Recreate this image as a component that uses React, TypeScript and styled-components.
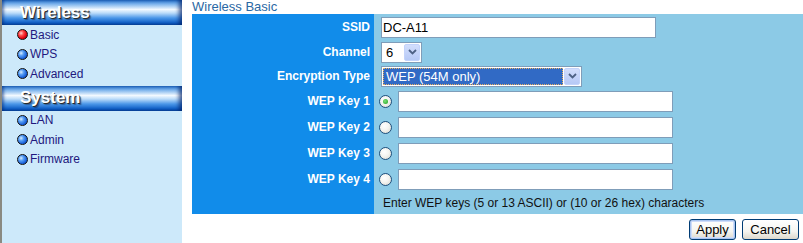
import React from "react";
import styled, { createGlobalStyle, css } from "styled-components";

const Global = createGlobalStyle`
  html, body { margin: 0; padding: 0; background: #fff; }
  body { font-family: Arial, "Liberation Sans", sans-serif; }
  * { box-sizing: border-box; }
`;

const Page = styled.div`
  display: flex;
  width: 803px;
  height: 243px;
  overflow: hidden;
`;

const Sidebar = styled.nav`
  width: 182px;
  flex: none;
  height: 243px;
  background: #cde9fa;
  border-left: 2px solid #8a8a82;
  display: flex;
  flex-direction: column;
`;

const SectionHeader = styled.div<{ $gap?: number }>`
  height: 25px;
  margin-top: ${(p) => p.$gap ?? 0}px;
  padding-left: 18px;
  display: flex;
  align-items: center;
  font: bold 17px Arial, "Liberation Sans", sans-serif;
  color: #fff;
  text-shadow: 1px 1px 0 #2a2a2a, 2px 2px 1px rgba(0, 0, 0, 0.35);
  background: linear-gradient(
    to bottom,
    #2a78d2 0%,
    #7ab2ec 16%,
    #f2f9ff 38%,
    #bcdcfa 52%,
    #4a96e8 72%,
    #0d5cc4 92%,
    #0a4aa2 100%
  );
  box-shadow: inset 3px 0 3px -1px rgba(0, 40, 120, 0.55),
    inset -4px 0 4px -1px rgba(0, 30, 100, 0.7);
`;

const MenuList = styled.ul`
  list-style: none;
  margin: 0;
  padding: 0;
`;

const MenuItem = styled.li`
  height: 19.5px;
  display: flex;
  align-items: center;
  padding-left: 15px;
  font-size: 12px;
  color: #22187e;
  gap: 2px;
`;

const Ball = styled.span<{ $active?: boolean }>`
  width: 11px;
  height: 11px;
  border-radius: 50%;
  border: 1px solid #101010;
  flex: none;
  ${(p) =>
    p.$active
      ? css`
          background: radial-gradient(circle at 35% 35%, #ffd0d0 0%, #ff4a4a 30%, #e00010 65%, #8a0008 100%);
        `
      : css`
          background: radial-gradient(circle at 35% 35%, #d8ecff 0%, #5aa0f4 30%, #1a62dc 65%, #0a3a9a 100%);
        `}
`;

const Main = styled.main`
  margin-left: 10px;
  flex: 1;
  display: flex;
  flex-direction: column;
`;

const Title = styled.div`
  height: 14px;
  font-size: 13px;
  line-height: 14px;
  color: #2a68a4;
  display: flex;
  align-items: flex-start;
`;

const Panel = styled.div`
  display: grid;
  grid-template-columns: 182px 1fr;
  grid-template-rows: 26px 24px 24px 26px 26px 26px 26px 22px;
  background: #8ccae6;
  height: 200px;
`;

const Label = styled.div`
  background: #118cea;
  color: #fff;
  font-weight: bold;
  font-size: 12px;
  display: flex;
  align-items: center;
  justify-content: flex-end;
  padding-right: 4px;
`;

const Cell = styled.div<{ $pad?: number }>`
  display: flex;
  align-items: center;
  padding-left: ${(p) => p.$pad ?? 7}px;
`;

const TextBox = styled.input<{ $w: number }>`
  width: ${(p) => p.$w}px;
  height: 21px;
  border: 1px solid #7f9db9;
  background: #fff;
  font: 13px Arial, "Liberation Sans", sans-serif;
  color: #000;
  padding: 0 0 0 1px;
  margin: 0;
  outline: none;
`;

const SelectBox = styled.div<{ $w: number }>`
  width: ${(p) => p.$w}px;
  height: 21px;
  border: 1px solid #7f9db9;
  background: #fff;
  display: flex;
  align-items: stretch;
  padding: 1px;
  font-size: 13px;
`;

const SelectValue = styled.div<{ $focused?: boolean }>`
  flex: 1;
  display: flex;
  align-items: center;
  padding-left: 3px;
  ${(p) =>
    p.$focused
      ? css`
          background: #316ac5;
          color: #fff;
          outline: 1px dotted #e8b060;
          outline-offset: -1px;
          margin-right: 1px;
        `
      : css`
          color: #000;
        `}
`;

const DropButton = styled.div`
  width: 16px;
  flex: none;
  border-radius: 2px;
  background: linear-gradient(to bottom, #d2defc, #b6c9f6);
  border: 1px solid #c3d3fb;
  display: flex;
  align-items: center;
  justify-content: center;
`;

const Radio = styled.span<{ $checked?: boolean }>`
  width: 13px;
  height: 13px;
  border-radius: 50%;
  border: 1px solid #1f4f7c;
  background: radial-gradient(circle at 40% 35%, #ffffff 0%, #f4f4f0 45%, #d4d4cc 100%);
  display: flex;
  align-items: center;
  justify-content: center;
  flex: none;
  margin-right: 6px;
  &::after {
    content: "";
    display: ${(p) => (p.$checked ? "block" : "none")};
    width: 5px;
    height: 5px;
    border-radius: 50%;
    background: radial-gradient(circle at 40% 40%, #7ee07a, #1aa01a);
  }
`;

const Note = styled.div`
  font-size: 12px;
  color: #111;
  padding-left: 9px;
  display: flex;
  align-items: center;
`;

const Actions = styled.div`
  display: flex;
  justify-content: flex-end;
  gap: 6px;
  padding: 5px 4px 0 0;
`;

const Button = styled.button<{ $default?: boolean; $w: number }>`
  width: ${(p) => p.$w}px;
  height: 21px;
  border: 1px solid #003c74;
  border-radius: 3px;
  background: linear-gradient(to bottom, #ffffff 0%, #f5f5f0 60%, #dcd8cc 100%);
  font: 13px Arial, "Liberation Sans", sans-serif;
  color: #000;
  padding: 0;
  ${(p) =>
    p.$default &&
    css`
      box-shadow: inset 0 0 0 1px #a8c4f0, inset 0 0 0 2px #cfdcf8;
    `}
`;

const Chevron = () => (
  <svg width="9" height="6" viewBox="0 0 9 6">
    <path d="M1 1 L4.5 4.5 L8 1" fill="none" stroke="#4d6185" strokeWidth="1.8" />
  </svg>
);

export default function App() {
  return (
    <>
      <Global />
      <Page>
        <Sidebar>
          <SectionHeader>Wireless</SectionHeader>
          <MenuList>
            <MenuItem><Ball $active />Basic</MenuItem>
            <MenuItem><Ball />WPS</MenuItem>
            <MenuItem><Ball />Advanced</MenuItem>
          </MenuList>
          <SectionHeader $gap={2}>System</SectionHeader>
          <MenuList>
            <MenuItem><Ball />LAN</MenuItem>
            <MenuItem><Ball />Admin</MenuItem>
            <MenuItem><Ball />Firmware</MenuItem>
          </MenuList>
        </Sidebar>
        <Main>
          <Title>Wireless Basic</Title>
          <Panel>
            <Label>SSID</Label>
            <Cell><TextBox $w={275} defaultValue="DC-A11" /></Cell>
            <Label>Channel</Label>
            <Cell>
              <SelectBox $w={41}>
                <SelectValue>6</SelectValue>
                <DropButton><Chevron /></DropButton>
              </SelectBox>
            </Cell>
            <Label>Encryption Type</Label>
            <Cell>
              <SelectBox $w={201}>
                <SelectValue $focused>WEP (54M only)</SelectValue>
                <DropButton><Chevron /></DropButton>
              </SelectBox>
            </Cell>
            {[1, 2, 3, 4].map((n) => (
              <React.Fragment key={n}>
                <Label>WEP Key {n}</Label>
                <Cell $pad={5}>
                  <Radio $checked={n === 1} />
                  <TextBox $w={275} />
                </Cell>
              </React.Fragment>
            ))}
            <Label />
            <Note>Enter WEP keys (5 or 13 ASCII) or (10 or 26 hex) characters</Note>
          </Panel>
          <Actions>
            <Button $default $w={47}>Apply</Button>
            <Button $w={57}>Cancel</Button>
          </Actions>
        </Main>
      </Page>
    </>
  );
}
